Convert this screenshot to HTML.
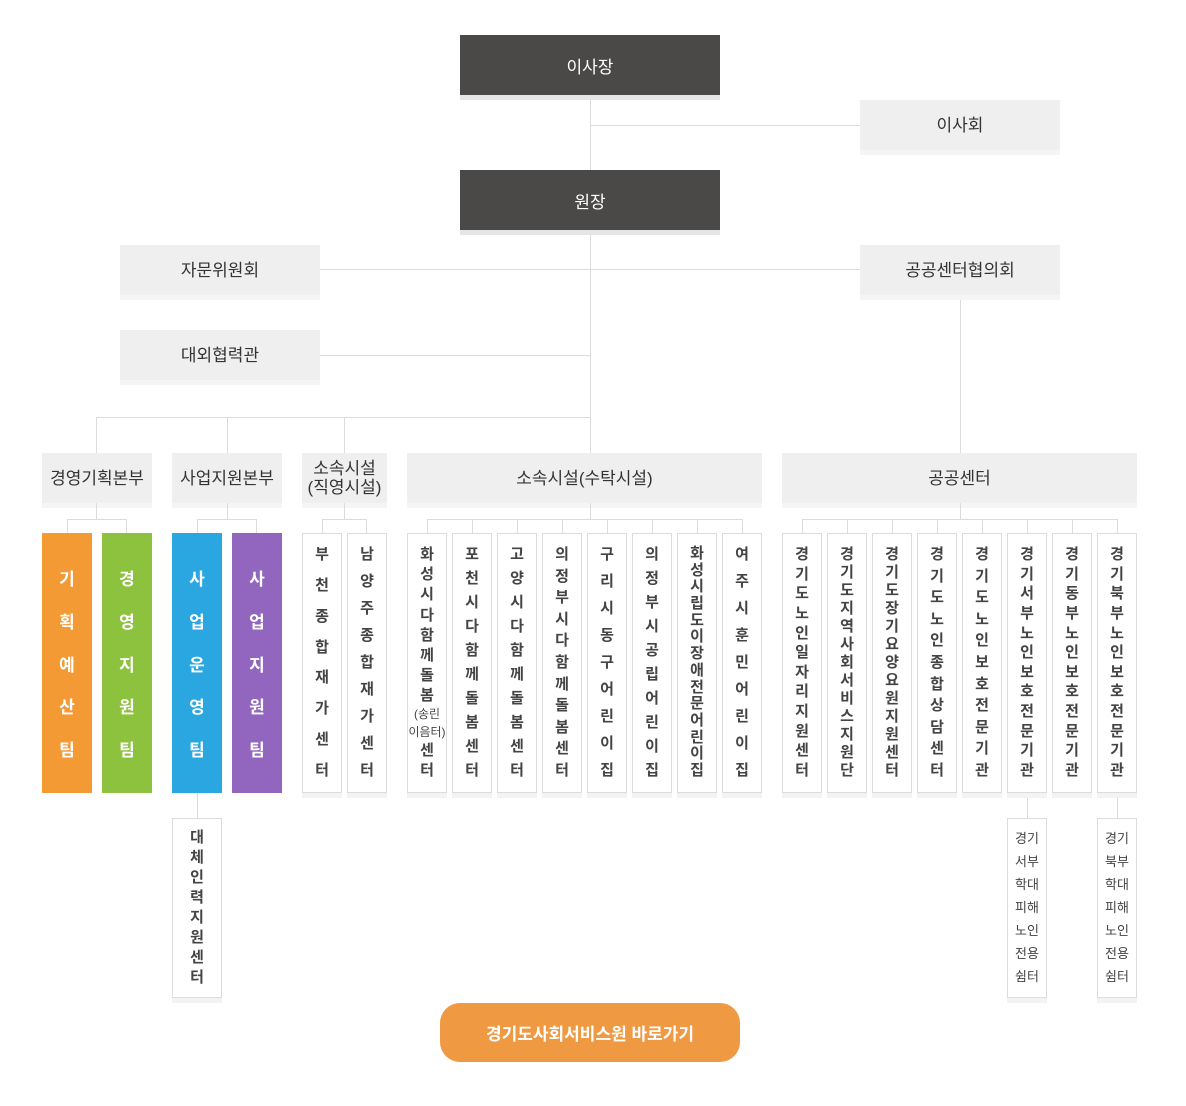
<!DOCTYPE html>
<html><head><meta charset="utf-8"><style>
*{margin:0;padding:0;box-sizing:border-box}
body{width:1186px;height:1106px;background:#fff;position:relative;font-family:"Liberation Sans","Noto Sans CJK KR",sans-serif;color:#333;overflow:hidden}
.a{position:absolute}
.l{position:absolute;background:#dcdcdc}
.dk{position:absolute;background:#4a4948;color:#fff;font-size:17px;display:flex;align-items:center;justify-content:center;box-shadow:0 5px 0 #e6e6e6}
.gr{position:absolute;background:#efefef;color:#333;font-size:17px;display:flex;align-items:center;justify-content:center;box-shadow:0 5px 0 #f5f5f5;text-align:center;line-height:19px}
.v{position:absolute;display:flex;flex-direction:column;justify-content:space-between;align-items:center;font-size:15px;font-weight:bold;line-height:18px}
.w{background:#fff;border:1px solid #dcdcdc;box-shadow:0 5px 0 #f3f3f3;color:#444}
.c{color:#fff;font-size:17px}
.sm{font-size:12px;font-weight:normal;line-height:15px}
</style></head><body>
<div class="l" style="left:590px;top:95px;width:1px;height:358px"></div>
<div class="l" style="left:590px;top:125px;width:270px;height:1px"></div>
<div class="l" style="left:320px;top:269px;width:540px;height:1px"></div>
<div class="l" style="left:320px;top:355px;width:270px;height:1px"></div>
<div class="l" style="left:96px;top:417px;width:494px;height:1px"></div>
<div class="l" style="left:96px;top:417px;width:1px;height:36px"></div>
<div class="l" style="left:227px;top:417px;width:1px;height:36px"></div>
<div class="l" style="left:344px;top:417px;width:1px;height:36px"></div>
<div class="l" style="left:960px;top:295px;width:1px;height:158px"></div>

<div class="dk" style="left:460px;top:35px;width:260px;height:60px">이사장</div>
<div class="gr" style="left:860px;top:100px;width:200px;height:50px">이사회</div>
<div class="dk" style="left:460px;top:170px;width:260px;height:60px">원장</div>
<div class="gr" style="left:120px;top:245px;width:200px;height:50px">자문위원회</div>
<div class="gr" style="left:860px;top:245px;width:200px;height:50px">공공센터협의회</div>
<div class="gr" style="left:120px;top:330px;width:200px;height:50px">대외협력관</div>

<div class="gr" style="left:42px;top:453px;width:110px;height:50px">경영기획본부</div>
<div class="gr" style="left:172px;top:453px;width:110px;height:50px">사업지원본부</div>
<div class="gr" style="left:302px;top:453px;width:85px;height:50px">소속시설<br>(직영시설)</div>
<div class="gr" style="left:407px;top:453px;width:355px;height:50px">소속시설(수탁시설)</div>
<div class="gr" style="left:782px;top:453px;width:355px;height:50px">공공센터</div>

<div class="l" style="left:96px;top:503px;width:1px;height:16px"></div>
<div class="l" style="left:67px;top:519px;width:60px;height:1px"></div>
<div class="l" style="left:67px;top:519px;width:1px;height:14px"></div>
<div class="l" style="left:126px;top:519px;width:1px;height:14px"></div>
<div class="l" style="left:227px;top:503px;width:1px;height:16px"></div>
<div class="l" style="left:197px;top:519px;width:60px;height:1px"></div>
<div class="l" style="left:197px;top:519px;width:1px;height:14px"></div>
<div class="l" style="left:256px;top:519px;width:1px;height:14px"></div>
<div class="l" style="left:344px;top:503px;width:1px;height:16px"></div>
<div class="l" style="left:322px;top:519px;width:45px;height:1px"></div>
<div class="l" style="left:322px;top:519px;width:1px;height:14px"></div>
<div class="l" style="left:366px;top:519px;width:1px;height:14px"></div>
<div class="l" style="left:590px;top:503px;width:1px;height:16px"></div>
<div class="l" style="left:427px;top:519px;width:315px;height:1px"></div>
<div class="l" style="left:960px;top:503px;width:1px;height:16px"></div>
<div class="l" style="left:802px;top:519px;width:315px;height:1px"></div>
<div class="l" style="left:427px;top:519px;width:1px;height:14px"></div>
<div class="l" style="left:472px;top:519px;width:1px;height:14px"></div>
<div class="l" style="left:517px;top:519px;width:1px;height:14px"></div>
<div class="l" style="left:562px;top:519px;width:1px;height:14px"></div>
<div class="l" style="left:607px;top:519px;width:1px;height:14px"></div>
<div class="l" style="left:652px;top:519px;width:1px;height:14px"></div>
<div class="l" style="left:697px;top:519px;width:1px;height:14px"></div>
<div class="l" style="left:742px;top:519px;width:1px;height:14px"></div>
<div class="l" style="left:802px;top:519px;width:1px;height:14px"></div>
<div class="l" style="left:847px;top:519px;width:1px;height:14px"></div>
<div class="l" style="left:892px;top:519px;width:1px;height:14px"></div>
<div class="l" style="left:937px;top:519px;width:1px;height:14px"></div>
<div class="l" style="left:982px;top:519px;width:1px;height:14px"></div>
<div class="l" style="left:1027px;top:519px;width:1px;height:14px"></div>
<div class="l" style="left:1072px;top:519px;width:1px;height:14px"></div>
<div class="l" style="left:1117px;top:519px;width:1px;height:14px"></div>
<div class="l" style="left:197px;top:793px;width:1px;height:25px"></div>
<div class="l" style="left:1027px;top:793px;width:1px;height:25px"></div>
<div class="l" style="left:1117px;top:793px;width:1px;height:25px"></div>

<div class="v c" style="left:42px;top:533px;width:50px;height:260px;background:#f39a35;padding:38px 0 33px"><span>기</span><span>획</span><span>예</span><span>산</span><span>팀</span></div>
<div class="v c" style="left:102px;top:533px;width:50px;height:260px;background:#8dc23e;padding:38px 0 33px"><span>경</span><span>영</span><span>지</span><span>원</span><span>팀</span></div>
<div class="v c" style="left:172px;top:533px;width:50px;height:260px;background:#2aa7e1;padding:38px 0 33px"><span>사</span><span>업</span><span>운</span><span>영</span><span>팀</span></div>
<div class="v c" style="left:232px;top:533px;width:50px;height:260px;background:#9266bf;padding:38px 0 33px"><span>사</span><span>업</span><span>지</span><span>원</span><span>팀</span></div>

<div class="v w" style="left:302px;top:533px;width:40px;height:260px;padding:12px 0 12px"><span>부</span><span>천</span><span>종</span><span>합</span><span>재</span><span>가</span><span>센</span><span>터</span></div>
<div class="v w" style="left:347px;top:533px;width:40px;height:260px;padding:12px 0 12px"><span>남</span><span>양</span><span>주</span><span>종</span><span>합</span><span>재</span><span>가</span><span>센</span><span>터</span></div>

<div class="v w" style="left:407px;top:533px;width:40px;height:260px;padding:12px 0 12px"><span>화</span><span>성</span><span>시</span><span>다</span><span>함</span><span>께</span><span>돌</span><span>봄</span><span class="sm">(송린</span><span class="sm">이음터)</span><span>센</span><span>터</span></div>
<div class="v w" style="left:452px;top:533px;width:40px;height:260px;padding:12px 0 12px"><span>포</span><span>천</span><span>시</span><span>다</span><span>함</span><span>께</span><span>돌</span><span>봄</span><span>센</span><span>터</span></div>
<div class="v w" style="left:497px;top:533px;width:40px;height:260px;padding:12px 0 12px"><span>고</span><span>양</span><span>시</span><span>다</span><span>함</span><span>께</span><span>돌</span><span>봄</span><span>센</span><span>터</span></div>
<div class="v w" style="left:542px;top:533px;width:40px;height:260px;padding:12px 0 12px"><span>의</span><span>정</span><span>부</span><span>시</span><span>다</span><span>함</span><span>께</span><span>돌</span><span>봄</span><span>센</span><span>터</span></div>
<div class="v w" style="left:587px;top:533px;width:40px;height:260px;padding:12px 0 12px"><span>구</span><span>리</span><span>시</span><span>동</span><span>구</span><span>어</span><span>린</span><span>이</span><span>집</span></div>
<div class="v w" style="left:632px;top:533px;width:40px;height:260px;padding:12px 0 12px"><span>의</span><span>정</span><span>부</span><span>시</span><span>공</span><span>립</span><span>어</span><span>린</span><span>이</span><span>집</span></div>
<div class="v w" style="left:677px;top:533px;width:40px;height:260px;padding:12px 0 14px;font-size:15px;line-height:15px"><span>화</span><span>성</span><span>시</span><span>립</span><span>도</span><span>이</span><span>장</span><span>애</span><span>전</span><span>문</span><span>어</span><span>린</span><span>이</span><span>집</span></div>
<div class="v w" style="left:722px;top:533px;width:40px;height:260px;padding:12px 0 12px"><span>여</span><span>주</span><span>시</span><span>훈</span><span>민</span><span>어</span><span>린</span><span>이</span><span>집</span></div>

<div class="v w" style="left:782px;top:533px;width:40px;height:260px;padding:12px 0 12px"><span>경</span><span>기</span><span>도</span><span>노</span><span>인</span><span>일</span><span>자</span><span>리</span><span>지</span><span>원</span><span>센</span><span>터</span></div>
<div class="v w" style="left:827px;top:533px;width:40px;height:260px;padding:12px 0 12px"><span>경</span><span>기</span><span>도</span><span>지</span><span>역</span><span>사</span><span>회</span><span>서</span><span>비</span><span>스</span><span>지</span><span>원</span><span>단</span></div>
<div class="v w" style="left:872px;top:533px;width:40px;height:260px;padding:12px 0 12px"><span>경</span><span>기</span><span>도</span><span>장</span><span>기</span><span>요</span><span>양</span><span>요</span><span>원</span><span>지</span><span>원</span><span>센</span><span>터</span></div>
<div class="v w" style="left:917px;top:533px;width:40px;height:260px;padding:12px 0 12px"><span>경</span><span>기</span><span>도</span><span>노</span><span>인</span><span>종</span><span>합</span><span>상</span><span>담</span><span>센</span><span>터</span></div>
<div class="v w" style="left:962px;top:533px;width:40px;height:260px;padding:12px 0 12px"><span>경</span><span>기</span><span>도</span><span>노</span><span>인</span><span>보</span><span>호</span><span>전</span><span>문</span><span>기</span><span>관</span></div>
<div class="v w" style="left:1007px;top:533px;width:40px;height:260px;padding:12px 0 12px"><span>경</span><span>기</span><span>서</span><span>부</span><span>노</span><span>인</span><span>보</span><span>호</span><span>전</span><span>문</span><span>기</span><span>관</span></div>
<div class="v w" style="left:1052px;top:533px;width:40px;height:260px;padding:12px 0 12px"><span>경</span><span>기</span><span>동</span><span>부</span><span>노</span><span>인</span><span>보</span><span>호</span><span>전</span><span>문</span><span>기</span><span>관</span></div>
<div class="v w" style="left:1097px;top:533px;width:40px;height:260px;padding:12px 0 12px"><span>경</span><span>기</span><span>북</span><span>부</span><span>노</span><span>인</span><span>보</span><span>호</span><span>전</span><span>문</span><span>기</span><span>관</span></div>

<div class="v w" style="left:172px;top:818px;width:50px;height:180px;padding:10px 0 10px"><span>대</span><span>체</span><span>인</span><span>력</span><span>지</span><span>원</span><span>센</span><span>터</span></div>
<div class="v w" style="left:1007px;top:818px;width:40px;height:180px;padding:11px 0 11px;font-size:13px;font-weight:normal"><span>경기</span><span>서부</span><span>학대</span><span>피해</span><span>노인</span><span>전용</span><span>쉼터</span></div>
<div class="v w" style="left:1097px;top:818px;width:40px;height:180px;padding:11px 0 11px;font-size:13px;font-weight:normal"><span>경기</span><span>북부</span><span>학대</span><span>피해</span><span>노인</span><span>전용</span><span>쉼터</span></div>

<div class="a" style="left:440px;top:1003px;width:300px;height:59px;background:#ef9a43;border-radius:20px;color:#fff;font-size:17px;font-weight:bold;display:flex;align-items:center;justify-content:center">경기도사회서비스원 바로가기</div>
</body></html>
